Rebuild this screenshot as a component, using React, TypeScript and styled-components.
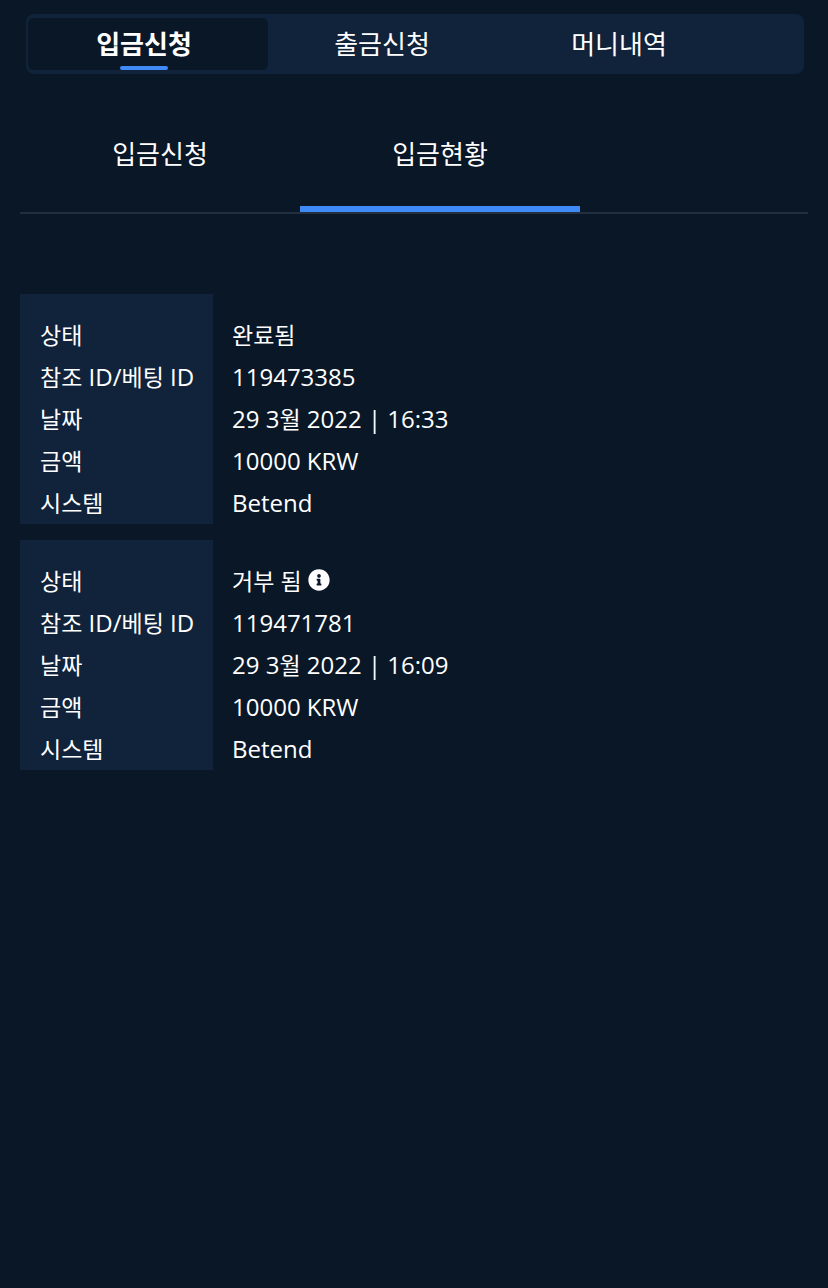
import React from "react";
import styled, { createGlobalStyle, css } from "styled-components";
import { FaInfoCircle } from "react-icons/fa";

const color = {
  page: "#091727",
  panel: "#11233a",
  accent: "#3f8af7",
  rule: "#222f3e",
  text: "#ffffff",
};

const GlobalStyle = createGlobalStyle`
  *, *::before, *::after { box-sizing: border-box; }
  body {
    margin: 0;
    background: ${color.page};
    color: ${color.text};
    font-family: "Open Sans", "Noto Sans CJK KR", sans-serif;
    font-size: 24px;
  }
`;

const Page = styled.main`
  min-height: 100vh;
  padding: 14px 20px 40px;
`;

const resetButton = css`
  margin: 0;
  border: 0;
  background: none;
  color: inherit;
  font: inherit;
  cursor: pointer;
`;

const MainTabs = styled.nav`
  display: grid;
  grid-template-columns: 240fr 236fr 238fr;
  height: 60px;
  margin: 0 4px 0 6px;
  padding: 4px 62px 4px 2px;
  border-radius: 8px;
  background: ${color.panel};
`;

const MainTab = styled.button<{ $active?: boolean }>`
  ${resetButton}
  display: flex;
  flex-direction: column;
  align-items: center;
  padding: 4px 8px 0 0;
  border-radius: 6px;
  background: ${(p) => (p.$active ? color.page : "transparent")};
  font-size: 26px;
  font-weight: ${(p) => (p.$active ? 700 : 400)};
  line-height: 44px;

  &::after {
    content: "";
    width: 48px;
    height: 4px;
    border-radius: 2px;
    background: ${(p) => (p.$active ? color.accent : "transparent")};
  }
`;

const SubTabs = styled.nav`
  display: flex;
  margin-top: 32px;
  border-bottom: 2px solid ${color.rule};
`;

const SubTab = styled.button<{ $active?: boolean }>`
  ${resetButton}
  flex: 0 1 280px;
  height: 106px;
  padding: 24px 0 28px;
  border-bottom: 6px solid ${(p) => (p.$active ? color.accent : "transparent")};
  font-size: 26px;
  line-height: 48px;
`;

const Records = styled.section`
  display: flex;
  flex-direction: column;
  gap: 16px;
  margin-top: 80px;
`;

const RecordTable = styled.table`
  width: 100%;
  border-collapse: collapse;
  line-height: 42px;

  tr:first-child > * {
    padding-top: 20px;
  }
`;

const Label = styled.th`
  width: 193px;
  padding: 0 0 0 20px;
  background: ${color.panel};
  font-weight: 400;
  text-align: left;
  white-space: nowrap;
`;

const Value = styled.td`
  padding: 0 0 0 19px;
`;

const Hangul = styled.span`
  font-family: "Noto Sans CJK KR", sans-serif;
  font-size: 23px;
  line-height: 1;
`;

const InfoButton = styled.button`
  ${resetButton}
  display: inline-flex;
  margin-left: 6px;
  padding: 0;
  font-size: 22px;
  line-height: 1;
  vertical-align: -1px;
`;

/* Hangul runs are set a little smaller so they sit evenly beside Latin text. */
function Mixed({ children }: { children: string }) {
  return (
    <>
      {children.split(/([가-힣]+)/).map((run, i) =>
        i % 2 ? <Hangul key={i}>{run}</Hangul> : run
      )}
    </>
  );
}

type Deposit = {
  status: string;
  hasInfo?: boolean;
  id: string;
  date: string;
  amount: string;
  system: string;
};

const deposits: Deposit[] = [
  {
    status: "완료됨",
    id: "119473385",
    date: "29 3월 2022 | 16:33",
    amount: "10000 KRW",
    system: "Betend",
  },
  {
    status: "거부 됨",
    hasInfo: true,
    id: "119471781",
    date: "29 3월 2022 | 16:09",
    amount: "10000 KRW",
    system: "Betend",
  },
];

function Row({
  label,
  value,
  children,
}: {
  label: string;
  value: string;
  children?: React.ReactNode;
}) {
  return (
    <tr>
      <Label scope="row">
        <Mixed>{label}</Mixed>
      </Label>
      <Value>
        <Mixed>{value}</Mixed>
        {children}
      </Value>
    </tr>
  );
}

function DepositRecord({ deposit }: { deposit: Deposit }) {
  return (
    <RecordTable>
      <tbody>
        <Row label="상태" value={deposit.status}>
          {deposit.hasInfo && (
            <InfoButton type="button" aria-label="거부 사유">
              <FaInfoCircle />
            </InfoButton>
          )}
        </Row>
        <Row label="참조 ID/베팅 ID" value={deposit.id} />
        <Row label="날짜" value={deposit.date} />
        <Row label="금액" value={deposit.amount} />
        <Row label="시스템" value={deposit.system} />
      </tbody>
    </RecordTable>
  );
}

export default function App() {
  return (
    <>
      <GlobalStyle />
      <Page>
        <MainTabs>
          <MainTab type="button" $active>
            입금신청
          </MainTab>
          <MainTab type="button">출금신청</MainTab>
          <MainTab type="button">머니내역</MainTab>
        </MainTabs>
        <SubTabs>
          <SubTab type="button">입금신청</SubTab>
          <SubTab type="button" $active>
            입금현황
          </SubTab>
        </SubTabs>
        <Records>
          {deposits.map((deposit) => (
            <DepositRecord key={deposit.id} deposit={deposit} />
          ))}
        </Records>
      </Page>
    </>
  );
}
